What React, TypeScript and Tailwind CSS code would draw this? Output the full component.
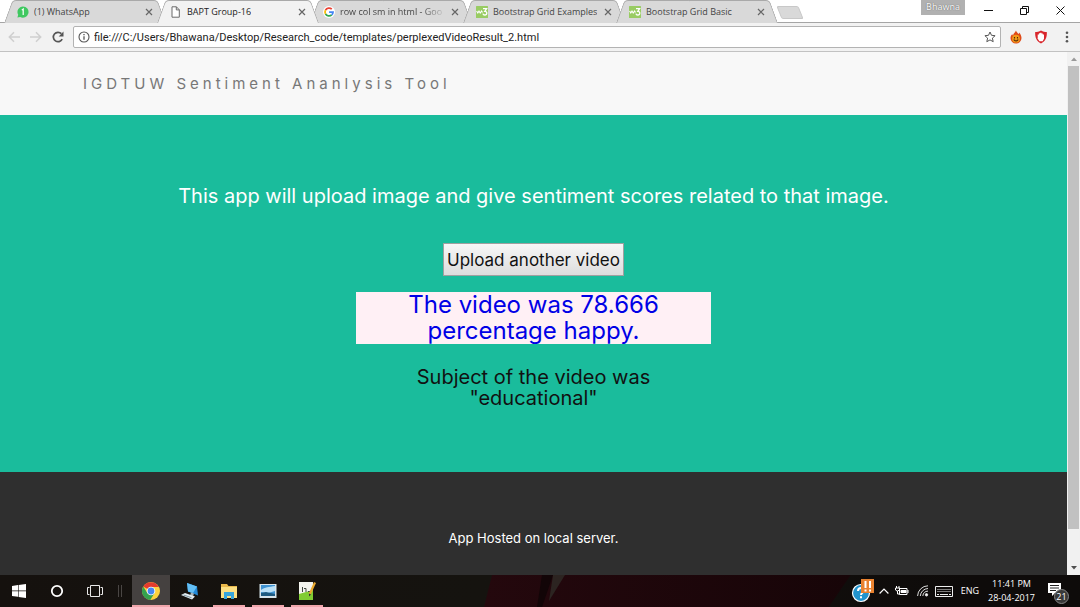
import type { ReactNode } from "react";

type TabInfo = { title: string; icon: ReactNode; active?: boolean; fade?: boolean };

function WhatsAppIcon() {
  return (
    <svg viewBox="0 0 12 12" className="size-3 shrink-0">
      <path d="M6 .4A5.6 5.6 0 1 1 3.2 10.9L.4 11.6l.8-2.8A5.6 5.6 0 0 1 6 .4z" fill="#3fc860" />
      <path d="M4.8 4.1 6.2 3v6" fill="none" stroke="#fff" strokeWidth="1.2" />
    </svg>
  );
}

function PageIcon() {
  return (
    <svg viewBox="0 0 12 12" className="size-3 shrink-0" fill="#fff" stroke="#6b6b6b">
      <path d="M2 .8h4.400l2.900 3v7.400H2z" />
      <path d="M6.300.8v3.100h3" fill="none" />
    </svg>
  );
}

function GoogleIcon() {
  return (
    <svg viewBox="0 0 12 12" className="size-3 shrink-0">
      <circle cx="6" cy="6" r="6" fill="#fff" />
      <g fill="none" strokeWidth="1.8">
        <path d="M8.8 3.2A4 4 0 0 0 2.500 4.100" stroke="#ea4335" />
        <path d="M2.500 4.100a4 4 0 0 0 0 3.800" stroke="#fbbc05" />
        <path d="M2.500 7.900a4 4 0 0 0 6.200 1" stroke="#34a853" />
        <path d="M8.700 8.900A4 4 0 0 0 10 6.200H6.100" stroke="#4285f4" />
      </g>
    </svg>
  );
}

function W3Icon() {
  return (
    <svg viewBox="0 0 12 12" className="size-3 shrink-0">
      <rect width="12" height="12" rx=".5" fill="#99cc63" />
      <path d="M.6 5l1.200 2L3 5l1.200 2L5.600 5l.9 1.600" fill="none" stroke="#fff" strokeWidth="1.100" />
      <path d="M7 2.700h3.600L8.800 5.300c2.800 0 2.500 3.900 0 3.700-1 0-1.700-.6-1.900-1.400" fill="none" stroke="#fff" strokeWidth="1.300" />
    </svg>
  );
}

const tabs: TabInfo[] = [
  { title: "(1) WhatsApp", icon: <WhatsAppIcon /> },
  { title: "BAPT Group-16", icon: <PageIcon />, active: true },
  { title: "row col sm in html - Goo", icon: <GoogleIcon />, fade: true },
  { title: "Bootstrap Grid Examples", icon: <W3Icon /> },
  { title: "Bootstrap Grid Basic", icon: <W3Icon /> },
];

const tabEdges =
  "before:absolute before:inset-y-0 before:left-0 before:w-1/2 before:origin-bottom-left before:-skew-x-[20deg] before:rounded-tl-sm before:border-l before:border-t before:border-[#a9a9a9] after:absolute after:inset-y-0 after:right-0 after:w-1/2 after:origin-bottom-right after:skew-x-[20deg] after:rounded-tr-sm after:border-r after:border-t after:border-[#a9a9a9]";

function Tab({ title, icon, active, fade }: TabInfo) {
  return (
    <div
      className={`relative -mr-2 h-[23px] w-[161px] min-w-0 ${tabEdges} ${
        active ? "z-10 before:bg-[#f2f2f2] after:bg-[#f2f2f2]" : "before:bg-[#d9d9d9] after:bg-[#d9d9d9]"
      }`}
    >
      <div className="relative z-10 flex h-full items-center gap-1 pl-[13px] pr-[10px]">
        <button
          role="tab"
          aria-selected={!!active}
          className={`flex min-w-0 flex-1 items-center gap-[5px] text-left text-[9px] ${active ? "text-[#222]" : "text-[#444]"}`}
        >
          {icon}
          <span
            className={`overflow-hidden whitespace-nowrap ${
              fade ? "[mask-image:linear-gradient(to_right,#000_80%,rgba(0,0,0,0.2))]" : ""
            }`}
          >
            {title}
          </span>
        </button>
        <button aria-label={`Close ${title}`} className="grid size-3 shrink-0 place-items-center">
          <svg viewBox="0 0 8 8" className="size-2" stroke="#666" strokeWidth="1.2">
            <path d="M1 1l6 6M7 1L1 7" />
          </svg>
        </button>
      </div>
    </div>
  );
}

function TabStrip() {
  return (
    <div className="relative flex h-[23px] items-start border-b border-[#a5a5a5] bg-white">
      <div role="tablist" className="flex min-w-0 flex-1 pl-1">
        {tabs.map((tab) => (
          <Tab key={tab.title} {...tab} />
        ))}
        <button
          aria-label="New tab"
          className="ml-[10px] mt-[6px] h-[13px] w-[22px] skew-x-[22deg] rounded-xs border border-[#c8c8c8] bg-[#d9d9d9]"
        />
      </div>
      <button className="mr-[5px] h-[15px] w-11 bg-[#b1b1b1] pb-px text-[9px] leading-[14px] text-white [text-shadow:0_0_1px_#444]">
        Bhawna
      </button>
      <div className="flex h-[21px] pr-[2px]">
        <button aria-label="Minimise" className="grid w-9 place-items-center">
          <svg viewBox="0 0 9 9" className="size-[9px]" stroke="#111">
            <path d="M0 4.500h9" />
          </svg>
        </button>
        <button aria-label="Restore" className="grid w-9 place-items-center">
          <svg viewBox="0 0 9 9" className="size-[9px]" fill="none" stroke="#111">
            <path d="M.5 2.500h6v6h-6zM2.500 2.500v-2h6v6h-2" />
          </svg>
        </button>
        <button aria-label="Close" className="grid w-9 place-items-center">
          <svg viewBox="0 0 9 9" className="size-[9px]" stroke="#111">
            <path d="M.5.5l8 8M8.500.5l-8 8" />
          </svg>
        </button>
      </div>
    </div>
  );
}

function Toolbar() {
  return (
    <div className="flex h-[29px] items-center border-b border-[#c2c2c2] bg-[#f2f2f2]">
      <div className="flex w-[73px] items-center gap-[10px] pl-2">
        <button aria-label="Back">
          <svg viewBox="0 0 12 12" className="size-3" fill="none" stroke="#cfcfcf" strokeWidth="1.5">
            <path d="M12 6H1.500M6 1.200L1.300 6 6 10.800" />
          </svg>
        </button>
        <button aria-label="Forward">
          <svg viewBox="0 0 12 12" className="size-3" fill="none" stroke="#cfcfcf" strokeWidth="1.5">
            <path d="M0 6h10.500M6 1.200L10.700 6 6 10.800" />
          </svg>
        </button>
        <button aria-label="Reload">
          <svg viewBox="0 0 12 12" className="size-3">
            <path d="M10.200 8.200A4.700 4.700 0 1 1 9.400 2.700" fill="none" stroke="#555" strokeWidth="1.700" />
            <path d="M11.500.5v4.900H6.700z" fill="#555" />
          </svg>
        </button>
      </div>
      <div className="flex h-[22px] min-w-0 flex-1 items-center gap-1 rounded-xs border border-[#b3b3b3] bg-white px-1">
        <button aria-label="Page information">
          <svg viewBox="0 0 12 12" className="size-3" fill="none" stroke="#555">
            <circle cx="6" cy="6" r="5" strokeWidth="1.100" />
            <path d="M6 5.200v3.600M6 3v1.300" strokeWidth="1.300" />
          </svg>
        </button>
        <input
          aria-label="Address"
          defaultValue="file:///C:/Users/Bhawana/Desktop/Research_code/templates/perplexedVideoResult_2.html"
          className="h-full min-w-0 flex-1 bg-transparent font-[Roboto,sans-serif] text-[11px] text-[#222] outline-none"
        />
        <button aria-label="Bookmark">
          <svg viewBox="0 0 12 12" className="size-3" fill="none" stroke="#555">
            <path d="M6 1l1.500 3.300 3.600.4-2.700 2.400.8 3.600L6 8.900l-3.200 1.800.8-3.600L.9 4.700l3.600-.4z" />
          </svg>
        </button>
      </div>
      <div className="flex w-[79px] items-center gap-[11px] pl-2">
        <button aria-label="Fire extension">
          <svg viewBox="0 0 14 14" className="size-[14px]">
            <path d="M7 .5c.2 1.500 1.600 2 2.300 3.400.7-.3.8-.9.8-1.500 1.600 1.800 2.400 3.500 2.400 5.700A5.400 5.400 0 0 1 7 13.500 5.400 5.400 0 0 1 1.500 8.200c0-1.800.7-3 1.800-4.200 0 .8.2 1.300.8 1.500C4.200 3.300 6.400 2.500 7 .5z" fill="#df4a18" />
            <circle cx="7" cy="8.700" r="3.900" fill="#f19a18" />
            <path d="M5.500 7v1.500M8.500 7v1.500M4.800 9.600c1 1.800 3.400 1.800 4.400 0" stroke="#552708" fill="none" strokeWidth="1.100" />
          </svg>
        </button>
        <button aria-label="Ad blocker">
          <svg viewBox="0 0 14 14" className="size-[14px]">
            <path d="M7 .5C9 1.700 11 2 12.800 2c.4 5-1.200 9.300-5.800 11.500C2.400 11.300.8 7 1.200 2 3 2 5 1.700 7 .5z" fill="#d9262c" />
            <path d="M3.700 8V4.500h1.200V3.300h1.300v-.6h1.300v.8h1.300v1h1.200v4.200L8.600 11.300H5.400L3.300 8z" fill="#fff" />
          </svg>
        </button>
        <button aria-label="Menu" className="ml-[6px]">
          <svg viewBox="0 0 4 12" className="h-3 w-1" fill="#555">
            <circle cx="2" cy="1.700" r="1.300" />
            <circle cx="2" cy="6" r="1.300" />
            <circle cx="2" cy="10.300" r="1.300" />
          </svg>
        </button>
      </div>
    </div>
  );
}

function ScrollRail() {
  return (
    <div aria-hidden className="flex w-[13px] shrink-0 flex-col items-center bg-[#f1f1f1]">
      <div className="grid h-[14px] place-items-center">
        <svg viewBox="0 0 6 4" className="h-1 w-[6px]">
          <path d="M0 4l3-3.500L6 4z" fill="#999" />
        </svg>
      </div>
      <div className="w-[11px] flex-1 bg-[#c1c1c1]" />
      <div className="h-8" />
      <div className="grid h-[14px] place-items-center">
        <svg viewBox="0 0 6 4" className="h-1 w-[6px]">
          <path d="M0 0h6L3 3.500z" fill="#505050" />
        </svg>
      </div>
    </div>
  );
}

function ResultPage() {
  return (
    <div className="flex min-w-0 flex-1 flex-col font-[Inter,sans-serif]">
      <nav className="flex bg-[#f8f8f8] px-[83px] py-5">
        <a href="#" className="text-[15px] leading-[23px] tracking-[4px] text-[#777]">
          IGDTUW Sentiment Ananlysis Tool
        </a>
      </nav>
      <main className="flex flex-col items-center bg-[#1abc9c] pb-[63px] pt-[68px] text-center">
        <p className="text-[20px] leading-[26px] text-white">
          This app will upload image and give sentiment scores related to that image.
        </p>
        <button className="mt-[34px] h-[33px] border border-[#a0a0a0] bg-linear-to-b from-[#f7f7f7] to-[#dddddd] px-[3px] text-[17px] leading-6 text-[#111]">
          Upload another video
        </button>
        <h2 className="mt-4 w-1/3 bg-[#fff0f5] px-10 text-[24px] leading-[26px] text-[#0000e6]">
          The video was 78.666 percentage happy.
        </h2>
        <h3 className="mt-[23px] w-1/3 px-14 text-[20px] leading-[21px] text-[#111]">
          Subject of the video was "educational"
        </h3>
      </main>
      <footer className="flex-1 bg-[#2f2f2f] pt-[57px] text-center text-[13px] leading-[18px] text-white">
        App Hosted on local server.
      </footer>
    </div>
  );
}

function TaskButton({ label, open, active, children }: { label: string; open?: boolean; active?: boolean; children: ReactNode }) {
  return (
    <button
      aria-label={label}
      className={`relative grid h-8 w-[38px] place-items-center ${active ? "bg-[#454140]" : ""}`}
    >
      {children}
      {open && <span className={`absolute bottom-0 h-[2px] bg-[#f0a5ab] ${active ? "inset-x-0" : "inset-x-[3px]"}`} />}
    </button>
  );
}

function Taskbar() {
  return (
    <div className="flex h-8 items-center justify-between bg-linear-to-r from-[#15110e] from-0% via-[#15130f] via-45% to-[#0e0b0a] to-90% text-white">
      <div className="flex">
        <TaskButton label="Start">
          <svg viewBox="0 0 14 14" className="size-[14px]" fill="#fff">
            <path d="M0 2l6-.9v5.500H0zM6.600 1L14 0v6.600H6.600zM0 7.300h6v5.500L0 12zM6.600 7.300H14V14l-7.400-1z" />
          </svg>
        </TaskButton>
        <TaskButton label="Cortana">
          <svg viewBox="0 0 14 14" className="size-[14px]">
            <circle cx="7" cy="7" r="5.200" fill="none" stroke="#fff" strokeWidth="1.800" />
          </svg>
        </TaskButton>
        <TaskButton label="Task view">
          <svg viewBox="0 0 16 12" className="h-3 w-4" fill="none" stroke="#e8e8e8">
            <path d="M3.500.5h9v11h-9zM2.500 2.500h-2v7h2M13.500 2.500h2v7h-2" />
          </svg>
        </TaskButton>
        <div className="flex w-[18px] items-center gap-[2px] pl-1">
          <span className="h-3 w-px bg-[#4a4644]" />
          <span className="h-3 w-px bg-[#4a4644]" />
        </div>
        <div className="flex gap-px">
          <TaskButton label="Chrome" open active>
            <svg viewBox="0 0 18 18" className="size-[18px]">
              <circle cx="9" cy="9" r="9" fill="#fdd23e" />
              <path d="M9 9L1.200 4.500A9 9 0 0 1 16.800 4.900H9z" fill="#e33b2e" />
              <path d="M1.200 4.500A9 9 0 0 0 8.300 18l4.200-7L9 9 5.400 11z" fill="#34a34f" />
              <circle cx="9" cy="9" r="4.300" fill="#fff" />
              <circle cx="9" cy="9" r="3.400" fill="#4688f1" />
            </svg>
          </TaskButton>
          <TaskButton label="Computer">
            <svg viewBox="0 0 20 18" className="h-[18px] w-5">
              <path d="M7 1l10 3.500 1 9L8 9.500z" fill="#2389d7" />
              <path d="M7 1l10 3.500-4 6.500L8 9.500z" fill="#63bff5" />
              <path d="M11 10.500l3 1-1 3-3-1z" fill="#a3b4bd" />
              <path d="M1 13l4-2 10 3.500-3 3z" fill="#e4edf2" />
              <path d="M3.500 13l8 2.700" stroke="#79919e" />
            </svg>
          </TaskButton>
          <TaskButton label="File Explorer" open>
            <svg viewBox="0 0 18 16" className="h-4 w-[18px]">
              <path d="M1 1h6l1.500 2H17v12H1z" fill="#e9b84a" />
              <path d="M1 4h16v11H1z" fill="#fbdf83" />
              <path d="M4 9h10v7h-3v-3H7v3H4z" fill="#36a5dc" />
            </svg>
          </TaskButton>
          <TaskButton label="Photos" open>
            <svg viewBox="0 0 18 16" className="h-4 w-[18px]">
              <path d="M.5 1h17v14H.5z" fill="#d7e4eb" />
              <path d="M2 2h14v11H2z" fill="#3d92d2" />
              <path d="M2 7c4-3 8-3 14-4v5L9 10l-7-1z" fill="#b9e0f7" />
              <path d="M2 10l5-1 9 2v2H2z" fill="#1e5a80" />
            </svg>
          </TaskButton>
          <TaskButton label="Notepad++" open>
            <svg viewBox="0 0 18 20" className="h-5 w-[18px]">
              <path d="M1 1h14v18H1z" fill="#f4f5ef" />
              <path d="M1 13l14-4v10H1z" fill="#80cc32" />
              <path d="M4.500 6v5M6 7.500h2v3.500M10 10.500h2" fill="none" stroke="#42483f" />
              <path d="M16 1l2 1-5 11-2 2v-3z" fill="#e9a82d" />
              <path d="M11 12.500l2 1-2 2z" fill="#333" />
            </svg>
          </TaskButton>
        </div>
      </div>
      <div
        aria-hidden
        className="ml-[158px] h-8 flex-1 bg-linear-to-r from-[#24080d] to-[#170508] [clip-path:polygon(8px_0,100%_0,94%_100%,0_100%)]"
      >
        <svg viewBox="0 0 80 32" className="ml-11 h-8 w-20">
          <path d="M14 0h11L14 32H9z" fill="#120507" />
          <path d="M25 0h12L21 26z" fill="#2c2421" />
        </svg>
      </div>
      <div className="flex items-center pr-[11px] text-[10px]">
        <button aria-label="Help and updates">
          <svg viewBox="0 0 24 24" className="size-6">
            <circle cx="10" cy="14" r="8.500" fill="#2194ce" stroke="#fff" strokeWidth="1.200" />
            <path d="M7 12c0-4 6-4 6-.5 0 2-3 2-3 4.500m0 1.300v2" fill="none" stroke="#fff" strokeWidth="2" />
            <path d="M10 0h13v14H10z" fill="#e9822f" />
            <path d="M14.500 2v7m0 1.500v2M19 2v7m0 1.500v2" stroke="#fff" strokeWidth="2" />
          </svg>
        </button>
        <button aria-label="Show hidden icons" className="ml-1">
          <svg viewBox="0 0 10 6" className="h-[6px] w-[10px]" fill="none" stroke="#fff" strokeWidth="1.200">
            <path d="M.6 5.500L5 1l4.400 4.500" />
          </svg>
        </button>
        <button aria-label="Battery" className="ml-[6px]">
          <svg viewBox="0 0 14 10" className="h-[10px] w-[14px]" fill="none" stroke="#fff">
            <path d="M4.500 2.500h7.500v6H4.500zM13 4v3M1.500 0v2M4 0v2M.5 2h4v2l-2 1H2L.5 4zM2.500 5v3h2" />
            <path d="M6 4.500h5v2H6z" fill="#fff" />
          </svg>
        </button>
        <button aria-label="Wi-Fi" className="ml-2">
          <svg viewBox="0 0 12 12" className="size-3" fill="none" stroke="#ddd">
            <path d="M.6 11A10.500 10.500 0 0 1 11 .8M3.300 11A8 8 0 0 1 11 3.500M5.800 11A5.500 5.500 0 0 1 11 6.100" />
            <circle cx="9.500" cy="9.800" r="1.200" fill="#fff" />
          </svg>
        </button>
        <button aria-label="Touch keyboard" className="ml-[6px]">
          <svg viewBox="0 0 18 11" className="h-[11px] w-[18px]" fill="none" stroke="#eee">
            <path d="M.5.5h17v10H.5z" />
            <path d="M2.500 3.500h13M2.500 5.500h13" strokeDasharray="1 1" />
            <path d="M2 8.500h2M5 8.500h8M14 8.500h2" />
          </svg>
        </button>
        <button className="ml-2 text-[9px]">ENG</button>
        <button className="ml-[9px] text-center text-[9px] leading-[14px]">
          <span className="block">11:41 PM</span>
          <span className="block">28-04-2017</span>
        </button>
        <button aria-label="21 notifications" className="relative ml-[13px] h-6 w-[21px]">
          <svg viewBox="0 0 13 13" className="-mt-1 size-[13px]">
            <path d="M0 0h13v10H7l-3 3v-3H0z" fill="#fff" />
            <path d="M2 2.500h9M2 5h9M2 7.500h6" stroke="#222" />
          </svg>
          <span className="absolute -bottom-px right-0 grid size-[15px] place-items-center rounded-full border border-[#858585] bg-[#393939] text-[9px] leading-3">
            21
          </span>
        </button>
      </div>
    </div>
  );
}

export default function App() {
  return (
    <div className="flex min-h-screen flex-col overflow-hidden bg-white font-['Open_Sans','Noto_Sans',sans-serif]">
      <TabStrip />
      <Toolbar />
      <div className="flex flex-1">
        <ResultPage />
        <ScrollRail />
      </div>
      <Taskbar />
    </div>
  );
}
